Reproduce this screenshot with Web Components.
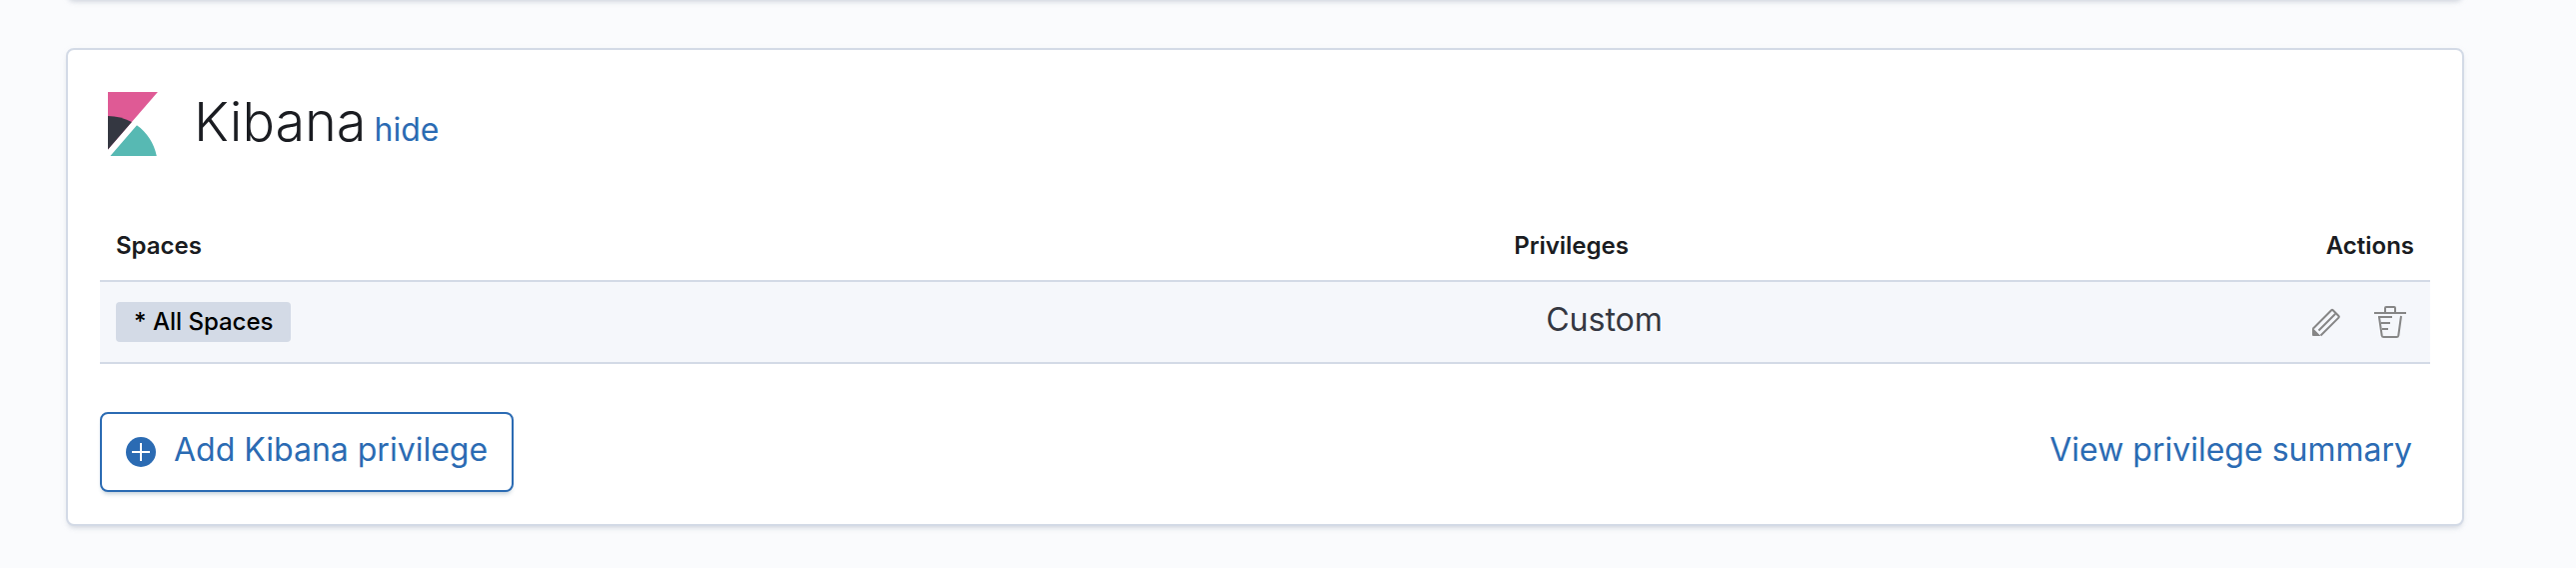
<!DOCTYPE html>
<html lang="en">
<head>
<meta charset="utf-8">
<title>Role privileges</title>
<style>
html { background: #fafbfd; }
body { margin: 0; font-family: Inter, "Liberation Sans", sans-serif; color: #343741; font-size: 32px; line-height: 48px; }
</style>
</head>
<body>
<role-page>
  <content-panel slot="previous"></content-panel>
  <content-panel>
    <panel-title slot="title" label="Kibana" toggle="hide"></panel-title>
    <privilege-table></privilege-table>
    <panel-actions slot="footer"></panel-actions>
  </content-panel>
</role-page>

<script>
const define = (name, html) => customElements.define(name, class extends HTMLElement {
  connectedCallback() {
    if (this.shadowRoot) return;
    const template = document.createElement('template');
    template.innerHTML = html;
    const root = this.attachShadow({ mode: 'open' });
    root.append(template.content.cloneNode(true));
    root.querySelectorAll('[data-from]').forEach(el => {
      el.textContent = this.getAttribute(el.dataset.from);
    });
    root.querySelectorAll('[data-name]').forEach(el => {
      el.setAttribute('aria-label', this.getAttribute('label'));
    });
  }
});

define('role-page', `
<style>
  :host { display: grid; gap: 48px; padding: 0 112px 32px 66px; overflow: hidden; }
  /* the preceding section is scrolled out above the viewport */
  ::slotted([slot=previous]) { margin-top: -68px; }
</style>
<slot name="previous"></slot><slot></slot>`);

define('content-panel', `
<style>
  :host { display: block; padding: 32px; border: 2px solid #d3dae6; border-radius: 8px; background: #fff;
    box-shadow: 0 4px 4px -2px rgba(152,162,179,.3), 0 2px 10px -4px rgba(152,162,179,.3); }
</style>
<slot name="title"></slot><slot></slot><slot name="footer"></slot>`);

define('kibana-logo', `
<style>:host { display: block; } svg { display: block; width: 64px; height: 64px; }</style>
<svg viewBox="0 0 32 32" aria-hidden="true">
  <path fill="#df5a95" d="M4 0v28.789L28.935.017z"/>
  <path fill="#343741" d="M4 12v16.789l11.906-13.738A24.721 24.721 0 004 12"/>
  <path fill="#57b9b3" d="M18.479 16.664L6.268 30.754l-1.073 1.237h23.191c-1.252-6.292-4.883-11.719-9.908-15.327"/>
</svg>`);

define('panel-title', `
<style>
  :host { display: flex; align-items: flex-start; gap: 30px; padding: 10px 0 8px; }
  .text { display: flex; align-items: baseline; gap: 8px; }
  h2 { margin: 0; font-size: 54px; line-height: 60px; font-weight: 300; color: #1a1c21; }
  a { color: #2b6bb3; text-decoration: none; line-height: 32px; }
</style>
<kibana-logo></kibana-logo>
<div class="text"><h2 data-from="label"></h2><a href="#" data-from="toggle"></a></div>`);

define('space-badge', `
<style>
  :host { display: block; width: fit-content; padding: 0 18px; border-radius: 4px; background: #d3dae6;
    color: #000; font-size: 24px; line-height: 40px; font-weight: 500; }
</style><slot></slot>`);

define('icon-button', `
<style>
  :host { display: block; color: #868686; }
  button { display: block; margin: 0; padding: 0; border: 0; background: none; color: inherit; font: inherit; }
  ::slotted(svg) { display: block; width: 32px; height: 32px; }
</style><button type="button" data-name><slot></slot></button>`);

define('privilege-table', `
<style>
  :host { display: block; margin-top: 48px; }
  table { width: 100%; table-layout: fixed; border-collapse: separate; border-spacing: 0; }
  .spaces { width: 60%; }
  .actions { width: 10%; }
  th { padding: 16px; text-align: left; font-size: 24px; line-height: 36px; font-weight: 600; color: #1a1c21; }
  th:last-child { text-align: right; }
  td { height: 48px; padding: 16px; background: #f5f7fb; border: solid #d3dae6; border-width: 2px 0; vertical-align: middle; }
  td.level { padding-left: 48px; line-height: 44px; vertical-align: top; }
  .row-actions { display: flex; justify-content: flex-end; gap: 32px; padding-right: 8px; }
</style>
<table>
  <colgroup><col class="spaces"><col><col class="actions"></colgroup>
  <thead><tr><th scope="col">Spaces</th><th scope="col">Privileges</th><th scope="col">Actions</th></tr></thead>
  <tbody><tr>
    <td><space-badge>* All Spaces</space-badge></td>
    <td class="level">Custom</td>
    <td><div class="row-actions">
      <icon-button label="Edit"><svg viewBox="0 0 32 32" fill="none" stroke="currentColor" stroke-width="2" aria-hidden="true">
        <path d="M3 22.500L21.200 4.300q.8-.8 1.600 0l5.700 5.700q.8.8 0 1.600L10.500 29.500M8.500 24.500L25 8"/>
        <path d="M2 21.500L10.500 30H3q-1 0-1-1z" fill="currentColor" stroke="none"/>
      </svg></icon-button>
      <icon-button label="Delete"><svg viewBox="0 0 32 32" fill="none" stroke="currentColor" stroke-width="2" aria-hidden="true">
        <path d="M0 7h32M11 7V2q0-1 1-1h8q1 0 1 1v5M4 11h14M7 17h9M8 23h6M5 11l2.700 18.500q.3 1.500 1.800 1.500h13q1.500 0 1.800-1.500L27 10"/>
      </svg></icon-button>
    </div></td>
  </tr></tbody>
</table>`);

define('panel-actions', `
<style>
  :host { display: flex; align-items: center; justify-content: space-between; margin-top: 48px; }
  button { display: flex; align-items: center; gap: 18px; height: 80px; margin: 0; padding: 0 24px; border: 2px solid #2b6bb3;
    border-radius: 8px; background: #fff; color: #2b6bb3; font: inherit;
    box-shadow: 0 4px 4px -2px rgba(54,97,126,.3); }
  svg { display: block; width: 30px; height: 30px; }
  span { padding-bottom: 4px; }
  a { padding: 0 18px 4px; color: #2b6bb3; text-decoration: none; }
</style>
<button type="button">
  <svg viewBox="0 0 30 30" aria-hidden="true"><circle cx="15" cy="15" r="15" fill="#2b6bb3"/><path d="M15 6v18M6 15h18" stroke="#fff" stroke-width="2"/></svg>
  <span>Add Kibana privilege</span>
</button>
<a href="#">View privilege summary</a>`);
</script>
</body>
</html>
